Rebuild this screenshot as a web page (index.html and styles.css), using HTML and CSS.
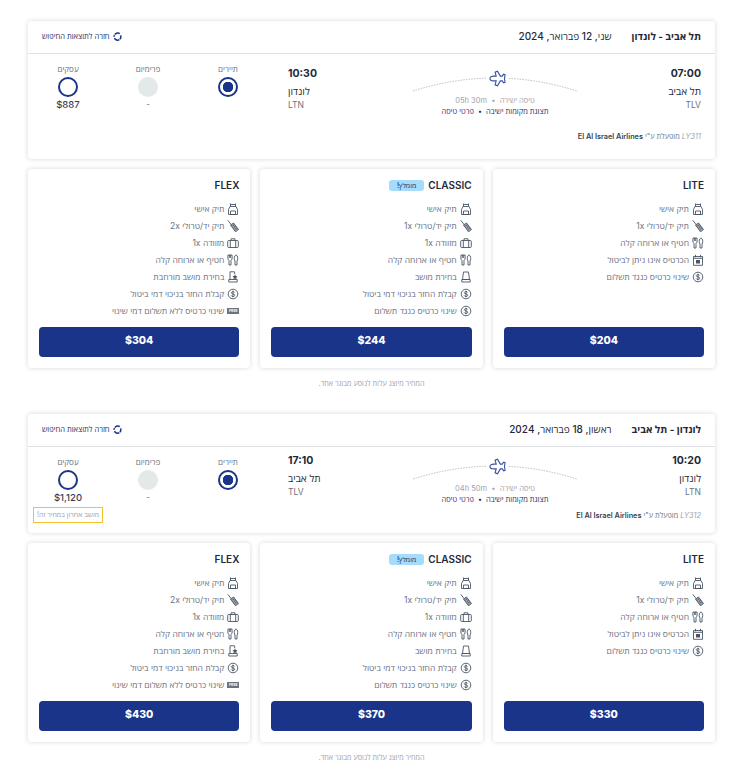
FILE: index.html
```html
<!DOCTYPE html>
<html lang="he" dir="rtl">
<head>
    <meta charset="UTF-8">
    <meta name="viewport" content="width=device-width, initial-scale=1.0">
    <title>בחירת טיסה</title>
    <link rel="stylesheet" href="styles.css">
</head>
<body>
    <svg class="icon-defs" width="0" height="0" aria-hidden="true">
        <symbol id="i-bag" viewBox="0 0 12 12"><path d="M3.500.5v3M8.500.5v3M3.500 1.500h5M3 3.500h6l1.500 3v5h-9v-5zM3.500 8h5v3.500h-5z"/></symbol>
        <symbol id="i-trolley" viewBox="0 0 12 12"><path d="M.8.3 4.300 4.800"/><path class="icon-tint" d="M3.500 5 6.500 3l5 6.500-3 2.300z"/><path d="M5.500 6 7.300 4.700M6.800 7.600 8.600 6.300M8 9.200 9.800 7.900"/></symbol>
        <symbol id="i-case" viewBox="0 0 12 12"><rect x=".7" y="3.500" width="10.600" height="7" rx="1"/><path d="M4 3.500V1.800h4v1.700M3.300 3.500v7M8.700 3.500v7"/></symbol>
        <symbol id="i-meal" viewBox="0 0 12 12"><path d="M1 1c-.3 2-.3 4 .5 5l.5.500V11h2V6.500l.5-.5c.8-1 .8-3 .5-5zM2.300 1v3M3.700 1v3M7.500 6c-.5-2-.3-4 1.500-5.200 1.800 1.200 2 3.200 1.500 5.200L10 7v4H8V7z"/></symbol>
        <symbol id="i-seat" viewBox="0 0 12 12"><path d="M3.500 1h5l1 7.500h-7zM1.800 8.500h8.400V11H1.800z"/></symbol>
        <symbol id="i-seat-plus" viewBox="0 0 12 12"><path d="M3 8.500V.8h4.500l.3 2.500M1.800 8.500h8.400V11H1.800z"/><path class="icon-solid" d="M8 3.500l.8 1.600 1.700.2-1.200 1.200.3 1.700L8 7.400l-1.600.8.300-1.700-1.200-1.200 1.700-.2z"/></symbol>
        <symbol id="i-dollar" viewBox="0 0 12 12"><circle cx="6" cy="6" r="4.800"/><path d="M7.700 4.500C7.400 3.800 6.800 3.600 6 3.600c-1 0-1.700.4-1.700 1.200C4.300 6.400 7.800 5.500 7.800 7.300c0 .8-.9 1.200-1.800 1.200s-1.600-.4-1.900-1.100M6 2.700v6.600"/></symbol>
        <symbol id="i-calendar" viewBox="0 0 12 12"><path d="M1.500 2.500h9V11.300h-9zM3.500.8v2.500M8.500.8v2.500M1.500 4.300h9"/><path class="icon-solid" d="M4 6h4v3.500H4z"/></symbol>
        <symbol id="i-plane" viewBox="0 0 18 18"><path d="M1 9c0-1.500 2-2.500 3.800-2.500h2.800L6.500 2.300 9 1.300l3 5.200h2l1.500-2 1.500.5-.6 4 .6 4-1.500.5-1.500-2h-2l-3 5.200-2.500-1 1.100-4.200H4.800C3 11.500 1 10.500 1 9z"/></symbol>
        <symbol id="i-refresh" viewBox="0 0 12 12"><path d="M2.500 3.500A4.500 4.500 0 0 1 9 2.200M10 4.500a4.500 4.500 0 0 1-.9 5M8.500 10.200A4.500 4.500 0 0 1 2 8.200M1.500 6.500a4.500 4.500 0 0 1 .5-2.300"/></symbol>
    </svg>

    <main class="page">
        <section class="bound">
            <div class="flight-card">
                <header class="flight-head">
                    <div class="flight-title">
                        <h2>תל אביב - לונדון</h2>
                        <span class="flight-date">שני, 12 פברואר, 2024</span>
                    </div>
                    <a class="back-link" href="#"><svg class="back-icon"><use href="#i-refresh"/></svg>חזרה לתוצאות החיפוש</a>
                </header>
                <div class="flight-body flight-body-tall">
                    <div class="flight-info">
                        <div class="route">
                            <div class="stop stop-from">
                                <strong class="stop-time">07:00</strong>
                                <span class="stop-city">תל אביב</span>
                                <span class="stop-code">TLV</span>
                            </div>
                            <div class="path">
                                <svg class="path-arc" viewBox="0 0 164 24" width="164" height="24">
                                    <path class="arc-line" d="M0 19Q82 -7 164 19"/>
                                    <rect class="arc-gap" x="74" y="0" width="21" height="14"/>
                                    <use class="arc-plane" href="#i-plane" x="76" y="-2" width="17" height="17"/>
                                </svg>
                                <p class="path-duration">טיסה ישירה &nbsp;•&nbsp; <span dir="ltr">05h 30m</span></p>
                                <p class="path-links"><a href="#">תצוגת מקומות ישיבה</a> &nbsp;•&nbsp; <a class="link-alt" href="#">פרטי טיסה</a></p>
                            </div>
                            <div class="stop stop-to">
                                <strong class="stop-time">10:30</strong>
                                <span class="stop-city">לונדון</span>
                                <span class="stop-code">LTN</span>
                            </div>
                        </div>
                        <p class="operator"><span class="flight-no">LY311</span> מופעלת ע"י <b>El Al Israel Airlines</b></p>
                    </div>
                    <div class="cabins">
                        <div class="cabin">
                            <span class="cabin-name">תיירים</span>
                            <span class="radio radio-on"></span>
                        </div>
                        <div class="cabin">
                            <span class="cabin-name">פרימיום</span>
                            <span class="radio radio-off"></span>
                            <span class="cabin-none">-</span>
                        </div>
                        <div class="cabin">
                            <span class="cabin-name">עסקים</span>
                            <span class="radio"></span>
                            <span class="cabin-price">$887</span>
                        </div>
                    </div>
                </div>
            </div>

            <div class="fares">
                <article class="fare">
                    <h3 class="fare-name">LITE</h3>
                    <ul class="fare-list">
                        <li><svg class="fare-icon"><use href="#i-bag"/></svg>תיק אישי</li>
                        <li><svg class="fare-icon"><use href="#i-trolley"/></svg>תיק יד/טרולי 1x</li>
                        <li><svg class="fare-icon"><use href="#i-meal"/></svg>חטיף או ארוחה קלה</li>
                        <li><svg class="fare-icon"><use href="#i-calendar"/></svg>הכרטיס אינו ניתן לביטול</li>
                        <li><svg class="fare-icon"><use href="#i-dollar"/></svg>שינוי כרטיס כנגד תשלום</li>
                    </ul>
                    <button class="fare-btn">$204</button>
                </article>
                <article class="fare">
                    <h3 class="fare-name">CLASSIC <span class="fare-badge">מומלץ!</span></h3>
                    <ul class="fare-list">
                        <li><svg class="fare-icon"><use href="#i-bag"/></svg>תיק אישי</li>
                        <li><svg class="fare-icon"><use href="#i-trolley"/></svg>תיק יד/טרולי 1x</li>
                        <li><svg class="fare-icon"><use href="#i-case"/></svg>מזוודה 1x</li>
                        <li><svg class="fare-icon"><use href="#i-meal"/></svg>חטיף או ארוחה קלה</li>
                        <li><svg class="fare-icon"><use href="#i-seat"/></svg>בחירת מושב</li>
                        <li><svg class="fare-icon"><use href="#i-dollar"/></svg>קבלת החזר בניכוי דמי ביטול</li>
                        <li><svg class="fare-icon"><use href="#i-dollar"/></svg>שינוי כרטיס כנגד תשלום</li>
                    </ul>
                    <button class="fare-btn">$244</button>
                </article>
                <article class="fare">
                    <h3 class="fare-name">FLEX</h3>
                    <ul class="fare-list">
                        <li><svg class="fare-icon"><use href="#i-bag"/></svg>תיק אישי</li>
                        <li><svg class="fare-icon"><use href="#i-trolley"/></svg>תיק יד/טרולי 2x</li>
                        <li><svg class="fare-icon"><use href="#i-case"/></svg>מזוודה 1x</li>
                        <li><svg class="fare-icon"><use href="#i-meal"/></svg>חטיף או ארוחה קלה</li>
                        <li><svg class="fare-icon"><use href="#i-seat-plus"/></svg>בחירת מושב מורחבת</li>
                        <li><svg class="fare-icon"><use href="#i-dollar"/></svg>קבלת החזר בניכוי דמי ביטול</li>
                        <li><span class="fare-free">FREE</span>שינוי כרטיס ללא תשלום דמי שינוי</li>
                    </ul>
                    <button class="fare-btn">$304</button>
                </article>
            </div>
            <p class="price-note">המחיר מיוצג עלות לנוסע מבוגר אחד.</p>
        </section>

        <section class="bound">
            <div class="flight-card">
                <header class="flight-head">
                    <div class="flight-title">
                        <h2>לונדון - תל אביב</h2>
                        <span class="flight-date">ראשון, 18 פברואר, 2024</span>
                    </div>
                    <a class="back-link" href="#"><svg class="back-icon"><use href="#i-refresh"/></svg>חזרה לתוצאות החיפוש</a>
                </header>
                <div class="flight-body">
                    <div class="flight-info">
                        <div class="route">
                            <div class="stop stop-from">
                                <strong class="stop-time">10:20</strong>
                                <span class="stop-city">לונדון</span>
                                <span class="stop-code">LTN</span>
                            </div>
                            <div class="path">
                                <svg class="path-arc" viewBox="0 0 164 24" width="164" height="24">
                                    <path class="arc-line" d="M0 19Q82 -7 164 19"/>
                                    <rect class="arc-gap" x="74" y="0" width="21" height="14"/>
                                    <use class="arc-plane" href="#i-plane" x="76" y="-2" width="17" height="17"/>
                                </svg>
                                <p class="path-duration">טיסה ישירה &nbsp;•&nbsp; <span dir="ltr">04h 50m</span></p>
                                <p class="path-links"><a href="#">תצוגת מקומות ישיבה</a> &nbsp;•&nbsp; <a class="link-alt" href="#">פרטי טיסה</a></p>
                            </div>
                            <div class="stop stop-to">
                                <strong class="stop-time">17:10</strong>
                                <span class="stop-city">תל אביב</span>
                                <span class="stop-code">TLV</span>
                            </div>
                        </div>
                        <p class="operator"><span class="flight-no">LY312</span> מופעלת ע"י <b>El Al Israel Airlines</b></p>
                    </div>
                    <div class="cabins">
                        <div class="cabin">
                            <span class="cabin-name">תיירים</span>
                            <span class="radio radio-on"></span>
                        </div>
                        <div class="cabin">
                            <span class="cabin-name">פרימיום</span>
                            <span class="radio radio-off"></span>
                            <span class="cabin-none">-</span>
                        </div>
                        <div class="cabin">
                            <span class="cabin-name">עסקים</span>
                            <span class="radio"></span>
                            <span class="cabin-price">$1,120</span>
                            <span class="cabin-last">מושב אחרון במחיר זה!</span>
                        </div>
                    </div>
                </div>
            </div>

            <div class="fares">
                <article class="fare">
                    <h3 class="fare-name">LITE</h3>
                    <ul class="fare-list">
                        <li><svg class="fare-icon"><use href="#i-bag"/></svg>תיק אישי</li>
                        <li><svg class="fare-icon"><use href="#i-trolley"/></svg>תיק יד/טרולי 1x</li>
                        <li><svg class="fare-icon"><use href="#i-meal"/></svg>חטיף או ארוחה קלה</li>
                        <li><svg class="fare-icon"><use href="#i-calendar"/></svg>הכרטיס אינו ניתן לביטול</li>
                        <li><svg class="fare-icon"><use href="#i-dollar"/></svg>שינוי כרטיס כנגד תשלום</li>
                    </ul>
                    <button class="fare-btn">$330</button>
                </article>
                <article class="fare">
                    <h3 class="fare-name">CLASSIC <span class="fare-badge">מומלץ!</span></h3>
                    <ul class="fare-list">
                        <li><svg class="fare-icon"><use href="#i-bag"/></svg>תיק אישי</li>
                        <li><svg class="fare-icon"><use href="#i-trolley"/></svg>תיק יד/טרולי 1x</li>
                        <li><svg class="fare-icon"><use href="#i-case"/></svg>מזוודה 1x</li>
                        <li><svg class="fare-icon"><use href="#i-meal"/></svg>חטיף או ארוחה קלה</li>
                        <li><svg class="fare-icon"><use href="#i-seat"/></svg>בחירת מושב</li>
                        <li><svg class="fare-icon"><use href="#i-dollar"/></svg>קבלת החזר בניכוי דמי ביטול</li>
                        <li><svg class="fare-icon"><use href="#i-dollar"/></svg>שינוי כרטיס כנגד תשלום</li>
                    </ul>
                    <button class="fare-btn">$370</button>
                </article>
                <article class="fare">
                    <h3 class="fare-name">FLEX</h3>
                    <ul class="fare-list">
                        <li><svg class="fare-icon"><use href="#i-bag"/></svg>תיק אישי</li>
                        <li><svg class="fare-icon"><use href="#i-trolley"/></svg>תיק יד/טרולי 2x</li>
                        <li><svg class="fare-icon"><use href="#i-case"/></svg>מזוודה 1x</li>
                        <li><svg class="fare-icon"><use href="#i-meal"/></svg>חטיף או ארוחה קלה</li>
                        <li><svg class="fare-icon"><use href="#i-seat-plus"/></svg>בחירת מושב מורחבת</li>
                        <li><svg class="fare-icon"><use href="#i-dollar"/></svg>קבלת החזר בניכוי דמי ביטול</li>
                        <li><span class="fare-free">FREE</span>שינוי כרטיס ללא תשלום דמי שינוי</li>
                    </ul>
                    <button class="fare-btn">$430</button>
                </article>
            </div>
            <p class="price-note">המחיר מיוצג עלות לנוסע מבוגר אחד.</p>
        </section>
    </main>
</body>
</html>
```

FILE: styles.css
```css
body {
    font-family: Inter, "Open Sans", "Noto Sans", sans-serif;
    margin: 0;
    padding: 0;
    background-color: #ffffff;
    color: #1f2937;
    overflow: hidden;
}
a {
    color: inherit;
    text-decoration: none;
}
h2, h3, p, ul {
    margin: 0;
    padding: 0;
}
.icon-defs {
    position: absolute;
}
.page {
    padding: 21px 27px 0 28px;
}
.bound {
    margin-bottom: 26px;
}
.flight-card, .fare {
    background-color: #ffffff;
    border-radius: 4px;
    box-shadow: 0 0 5px rgba(30, 40, 60, 0.18);
}
.flight-head {
    display: flex;
    justify-content: space-between;
    align-items: center;
    box-sizing: border-box;
    height: 33px;
    padding: 0 14px 2px;
    border-bottom: 1px solid #dfe1e5;
}
.flight-title {
    display: flex;
    align-items: center;
    gap: 20px;
}
.flight-title h2 {
    font-size: 10px;
    font-weight: 700;
}
.flight-date {
    font-size: 10px;
    font-weight: 500;
    color: #1f2937;
}
.back-link {
    display: flex;
    align-items: center;
    gap: 3px;
    font-size: 7.5px;
    font-weight: 500;
    color: #1e2f6b;
}
.back-icon {
    width: 9px;
    height: 9px;
    fill: none;
    stroke: #1a3489;
    stroke-width: 2;
}
.flight-body {
    display: flex;
    justify-content: space-between;
    padding-right: 14px;
    height: 86px;
}
.flight-body-tall {
    height: 105px;
}
.flight-info {
    width: 433px;
    padding-top: 7px;
}
.flight-body-tall .flight-info {
    padding-top: 13px;
}
.route {
    display: flex;
}
.stop {
    display: flex;
    flex-direction: column;
}
.stop-from {
    width: 124px;
}
.stop-to {
    width: 48px;
    margin-right: 77px;
    align-items: flex-end;
}
.stop-time {
    font-size: 10.5px;
    font-weight: 700;
    line-height: 14px;
    color: #1f2937;
}
.stop-city {
    font-size: 10px;
    font-weight: 500;
    line-height: 14px;
    margin-top: 3px;
}
.stop-code {
    font-size: 8.5px;
    line-height: 12px;
    margin-top: 1px;
    color: #6b7280;
}
.path {
    width: 164px;
    margin-top: 6px;
    text-align: center;
}
.flight-body-tall .path {
    margin-top: 5px;
}
.path-arc {
    display: block;
    overflow: visible;
}
.arc-line {
    fill: none;
    stroke: #b9bcc2;
    stroke-width: 1;
    stroke-dasharray: 1.5 1.2;
}
.arc-gap {
    fill: #ffffff;
}
.arc-plane {
    fill: #ffffff;
    stroke: #3c50a3;
    stroke-width: 1.2;
}
.path-duration {
    font-size: 7.5px;
    line-height: 10px;
    color: #9ca3af;
}
.path-links {
    font-size: 7.5px;
    font-weight: 500;
    line-height: 10px;
    margin-top: 1px;
    color: #1e2f6b;
}
.link-alt {
    color: #5b2a72;
}
.operator {
    font-size: 7.3px;
    line-height: 10px;
    margin-top: 6px;
    color: #6b7280;
}
.flight-body-tall .operator {
    margin-top: 15px;
}
.operator b {
    font-weight: 600;
    color: #374151;
}
.flight-no {
    color: #9ca3af;
    font-style: italic;
}
.cabins {
    display: flex;
    width: 240px;
    padding-top: 10px;
}
.cabin {
    width: 80px;
    display: flex;
    flex-direction: column;
    align-items: center;
}
.cabin-name {
    font-size: 8px;
    font-weight: 500;
    line-height: 10px;
    color: #6b7280;
}
.radio {
    box-sizing: border-box;
    width: 20px;
    height: 20px;
    margin-top: 3px;
    border: 2px solid #1a3489;
    border-radius: 50%;
}
.radio-on {
    background: radial-gradient(circle, #1a3489 0, #1a3489 5px, #ffffff 5.5px);
}
.radio-off {
    border: none;
    background-color: #e3e8e8;
}
.cabin-none {
    font-size: 8px;
    line-height: 10px;
    margin-top: 2px;
    color: #6b7280;
}
.cabin-price {
    font-size: 9.5px;
    font-weight: 500;
    line-height: 12px;
    margin-top: 2px;
    color: #374151;
}
.cabin-last {
    margin-top: 3px;
    padding: 2px 3px;
    font-size: 7px;
    line-height: 10px;
    white-space: nowrap;
    color: #9ca3af;
    border: 1px solid #f5c02e;
}
.fares {
    display: grid;
    grid-template-columns: repeat(3, 1fr);
    gap: 10px;
    margin-top: 10px;
}
.fare {
    display: flex;
    flex-direction: column;
    box-sizing: border-box;
    height: 199px;
    padding: 10px 11px 11px;
}
.fare-name {
    display: flex;
    align-items: center;
    gap: 4px;
    font-size: 10px;
    font-weight: 600;
    line-height: 12px;
    color: #1f2937;
}
.fare-badge {
    padding: 0 8px;
    font-size: 7px;
    font-weight: 500;
    line-height: 11px;
    border-radius: 3px;
    color: #1e2f6b;
    background-color: #a5dcfb;
}
.fare-list {
    list-style-type: none;
    margin-top: 9px;
    flex: 1;
}
.fare-list li {
    display: flex;
    align-items: center;
    gap: 3px;
    height: 17px;
    font-size: 8.5px;
    color: #6b7280;
}
.fare-icon {
    width: 12px;
    height: 12px;
    flex-shrink: 0;
    fill: none;
    stroke: #4b5563;
    stroke-width: 0.9;
}
.icon-solid {
    fill: #4b5563;
    stroke: none;
}
.icon-tint {
    fill: #9aa1ac;
}
.fare-free {
    box-sizing: border-box;
    width: 12px;
    height: 6px;
    font-size: 3.5px;
    font-weight: 700;
    line-height: 6px;
    text-align: center;
    color: #ffffff;
    background-color: #6b7280;
}
.fare-btn {
    height: 30px;
    padding: 0 0 3px;
    font-family: inherit;
    font-size: 10.5px;
    font-weight: 800;
    color: #ffffff;
    background-color: #1a3489;
    border: none;
    border-radius: 4px;
    cursor: pointer;
}
.price-note {
    margin-top: 12px;
    font-size: 7.2px;
    line-height: 8px;
    text-align: center;
    color: #9ca3af;
}
```
